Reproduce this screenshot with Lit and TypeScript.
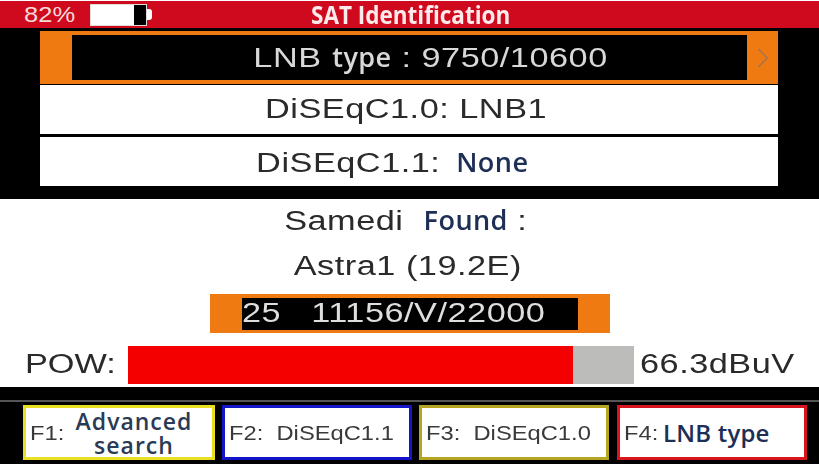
import { LitElement, html, css } from "lit";
import { customElement } from "lit/decorators.js";

@customElement("app-root")
export class AppRoot extends LitElement {
  static styles = css`
    :host {
      display: block;
      width: 819px;
      height: 464px;
      overflow: hidden;
      background: #fff;
      font-family: "Liberation Sans", Arial, sans-serif;
      color: #2a2a2a;
    }
    .screen { width: 819px; height: 464px; display: flex; flex-direction: column; filter: blur(0.5px); }
    .cal { font-family: "Open Sans", "Noto Sans", sans-serif; font-weight: 600; }

    /* The device screen is a stretched capture: Arial-like text runs wide, the other face does not. */
    .wide { display: inline-block; transform: scaleX(1.27); white-space: pre; }
    .wide-left { display: inline-block; transform: scaleX(1.27); transform-origin: left center; white-space: pre; }
    .word { display: inline-block; transform: scaleX(0.79); }
    .t-type { margin: 0 -6px; }
    .t-none { margin: 0 -8px 0 -3px; }
    .t-found { margin: 0 -9px; }

    .header {
      height: 27px; margin-top: 1px; background: #cf0a1e; color: #fff;
      display: flex; align-items: center; flex: none;
    }
    .pct { width: 66px; margin-left: 24px; font-size: 22px; color: #f6d9d9; display: inline-block; transform: scaleX(1.16); transform-origin: left center; }
    .battery { display: flex; align-items: center; height: 22px; }
    .bat-body { width: 57px; height: 22px; background: #fff; border: 1px solid #ddd; box-sizing: border-box; display: flex; justify-content: flex-end; }
    .bat-level { width: 12px; background: #000; }
    .bat-tip { width: 5px; height: 11px; background: #fff; border-radius: 0 3px 3px 0; }
    .title {
      margin-left: 159px; font-size: 25px; line-height: 27px; font-weight: 700; color: #fdeaea;
      transform: scaleX(0.9); transform-origin: left center; white-space: nowrap;
    }

    .menu {
      height: 171px; background: #000; flex: none; box-sizing: border-box;
      padding: 3px 41px 0 40px; display: flex; flex-direction: column;
    }
    .sel {
      height: 53px; background: #f07a12; display: flex; align-items: center; padding: 0 0 0 32px; flex: none;
    }
    .sel-in {
      width: 675px; height: 45px; box-sizing: border-box; padding-left: 42px; padding-bottom: 3px;
      background: #000; color: #d8d8d8; font-size: 27px;
      display: flex; align-items: center; justify-content: center; letter-spacing: 0.4px; white-space: pre;
    }
    .chev { flex: 1; display: flex; justify-content: center; }
    .row {
      height: 49px; background: #fff; display: flex; align-items: center; justify-content: center;
      font-size: 27px; letter-spacing: 0.4px; white-space: pre; flex: none; box-sizing: border-box;
    }
    .row.first { margin-top: 1px; padding-right: 6px; }
    .row.second { margin-top: 3px; padding-right: 34px; }

    .info { flex: 1; display: flex; flex-direction: column; align-items: center; min-height: 0; }
    .line { font-size: 27px; letter-spacing: 0.4px; height: 36px; display: flex; align-items: center; white-space: pre; }
    .line.one { margin-top: 2px; padding-right: 7px; }
    .line.two { margin-top: 11px; padding-right: 4px; }
    .tp {
      margin-top: 10px; width: 400px; height: 39px; background: #f07a12; display: flex; align-items: center;
      box-sizing: border-box; padding: 0 32px; flex: none;
    }
    .tp-in {
      flex: 1; height: 32px; background: #000; color: #dedede; font-size: 27px; display: flex; align-items: center;
      white-space: pre; letter-spacing: 0.4px;
    }
    .pow { align-self: stretch; display: flex; align-items: center; margin-top: 12px; height: 39px; padding-left: 25px; flex: none; }
    .pow-label { width: 103px; font-size: 27px; }
    .bar { width: 506px; height: 38px; background: #bcbdbb; display: flex; flex: none; }
    .fill { background: #f50000; }
    .pow-val { margin-left: 6px; font-size: 27px; letter-spacing: 0.4px; }

    .footer {
      height: 77px; background: #000; flex: none; box-sizing: border-box;
      display: flex; flex-direction: column;
    }
    .sep { height: 2px; margin-top: 13px; background: #555; flex: none; }
    .keys { display: flex; gap: 7px; padding: 3px 0 0 23px; }
    .key {
      height: 55px; box-sizing: border-box; border: 3px solid; background: #fff; display: flex; align-items: center;
      padding-left: 4px; font-size: 21px; white-space: pre; color: #3a3a3a; flex: none;
    }
    .k1 { width: 192px; border-color: #e8e020; }
    .k2 { width: 190px; border-color: #1414c8; }
    .k3 { width: 190px; border-color: #b5a520; }
    .k4 { width: 190px; border-color: #d8141e; margin-left: 1px; }
    .fk { display: inline-block; transform: scaleX(1.13); transform-origin: left center; }
    .two-line {
      flex: 1; text-align: center; font-size: 23px; line-height: 24px; color: #2b3a55; padding-right: 14px; letter-spacing: 1px;
    }
    .f1-label { width: 40px; flex: none; }
    .f4-label { width: 37px; flex: none; }
    .f4-val { font-size: 24px; margin-left: 2px; letter-spacing: 0.2px; }
    .blue { color: #1d2f55; }
  `;

  render() {
    return html`
      <div class="screen">
        <div class="header">
          <span class="pct">82%</span>
          <div class="battery">
            <div class="bat-body"><div class="bat-level"></div></div>
            <div class="bat-tip"></div>
          </div>
          <span class="title cal">SAT Identification</span>
        </div>

        <div class="menu">
          <div class="sel">
            <div class="sel-in">
              <span class="wide">LNB <span class="word t-type cal">type</span> : 9750/10600</span>
            </div>
            <div class="chev">
              <svg width="12" height="20" viewBox="0 0 12 20">
                <path d="M1.5 1 L10 10 L1.5 19" fill="none" stroke="#a9744a" stroke-width="1.6" />
              </svg>
            </div>
          </div>
          <div class="row first"><span class="wide">DiSEqC1.0: LNB1</span></div>
          <div class="row second">
            <span class="wide">DiSEqC1.1: <span class="word t-none cal blue">None</span></span>
          </div>
        </div>

        <div class="info">
          <div class="line one">
            <span class="wide">Samedi  <span class="word t-found cal blue">Found</span> :</span>
          </div>
          <div class="line two"><span class="wide">Astra1 (19.2E)</span></div>
          <div class="tp">
            <div class="tp-in">
              <span class="wide-left">25   11156/V/22000</span>
            </div>
          </div>
          <div class="pow">
            <span class="pow-label"><span class="wide-left">POW:</span></span>
            <div class="bar"><div class="fill" style="width: ${(445 / 506) * 100}%"></div></div>
            <span class="pow-val"><span class="wide-left">66.3dBuV</span></span>
          </div>
        </div>

        <div class="footer">
          <div class="sep"></div>
          <div class="keys">
            <div class="key k1">
              <span class="fk f1-label">F1:</span>
              <span class="two-line cal">Advanced<br />search</span>
            </div>
            <div class="key k2"><span class="fk">F2:  DiSEqC1.1</span></div>
            <div class="key k3"><span class="fk">F3:  DiSEqC1.0</span></div>
            <div class="key k4">
              <span class="fk f4-label">F4:</span>
              <span class="cal blue f4-val">LNB type</span>
            </div>
          </div>
        </div>
      </div>
    `;
  }
}
